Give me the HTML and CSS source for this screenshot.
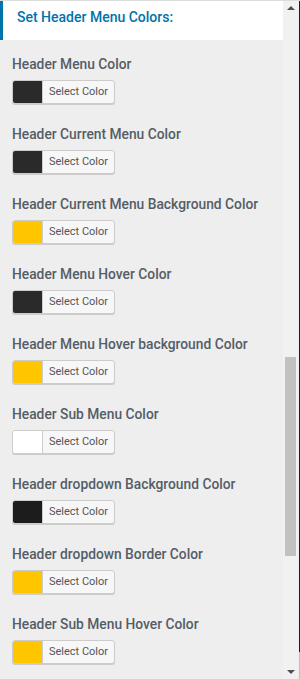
FILE: index.html
```html
<!DOCTYPE html>
<html lang="en">
<head>
    <meta charset="UTF-8">
    <meta name="viewport" content="width=device-width, initial-scale=1.0">
    <title>Header Menu Colors</title>
    <link rel="stylesheet" href="styles.css">
</head>
<body>

<div class="frame">
    <div class="panel">
        <h3 class="section-title">Set Header Menu Colors:</h3>

        <div class="control">
            <span class="control-label">Header Menu Color</span>
            <button class="color-btn"><span class="swatch dark"></span><span class="btn-text">Select Color</span></button>
        </div>
        <div class="control">
            <span class="control-label">Header Current Menu Color</span>
            <button class="color-btn"><span class="swatch dark"></span><span class="btn-text">Select Color</span></button>
        </div>
        <div class="control">
            <span class="control-label">Header Current Menu Background Color</span>
            <button class="color-btn"><span class="swatch yellow"></span><span class="btn-text">Select Color</span></button>
        </div>
        <div class="control">
            <span class="control-label">Header Menu Hover Color</span>
            <button class="color-btn"><span class="swatch dark"></span><span class="btn-text">Select Color</span></button>
        </div>
        <div class="control">
            <span class="control-label">Header Menu Hover background Color</span>
            <button class="color-btn"><span class="swatch yellow"></span><span class="btn-text">Select Color</span></button>
        </div>
        <div class="control">
            <span class="control-label">Header Sub Menu Color</span>
            <button class="color-btn"><span class="swatch white"></span><span class="btn-text">Select Color</span></button>
        </div>
        <div class="control">
            <span class="control-label">Header dropdown Background Color</span>
            <button class="color-btn"><span class="swatch black"></span><span class="btn-text">Select Color</span></button>
        </div>
        <div class="control">
            <span class="control-label">Header dropdown Border Color</span>
            <button class="color-btn"><span class="swatch yellow"></span><span class="btn-text">Select Color</span></button>
        </div>
        <div class="control">
            <span class="control-label">Header Sub Menu Hover Color</span>
            <button class="color-btn"><span class="swatch yellow"></span><span class="btn-text">Select Color</span></button>
        </div>
    </div>

    <div class="scrollbar">
        <span class="arrow up"></span>
        <div class="track">
            <div class="thumb"></div>
        </div>
        <span class="arrow down"></span>
    </div>

    <div class="edge"></div>
</div>

</body>
</html>
```

FILE: styles.css
```css
* {
    margin: 0;
    padding: 0;
    box-sizing: border-box;
}

body {
    font-family: Roboto, "Liberation Sans", sans-serif;
    background-color: #eeeeee;
    height: 679px;
    overflow: hidden;
}

.frame {
    display: flex;
    height: 679px;
    border-top: 1px solid #dcdcdc;
}

.panel {
    width: 283px;
    flex-shrink: 0;
    overflow: hidden;
    background-color: #eeeeee;
}

.section-title {
    height: 39px;
    background-color: #fff;
    border-left: 3px solid #0073aa;
    padding: 0 0 0 14px;
    font-size: 14px;
    font-weight: 500;
    line-height: 33px;
    color: #0073aa;
}

.control {
    padding: 14px 12px 0;
    display: flex;
    flex-direction: column;
    align-items: flex-start;
    gap: 6px;
    margin-bottom: 6px;
}

.control-label {
    font-size: 13.8px;
    font-weight: 500;
    line-height: 20px;
    color: #555d66;
    white-space: nowrap;
}

.color-btn {
    display: flex;
    align-items: stretch;
    height: 24px;
    width: 103px;
    border: 1px solid #cccccc;
    border-radius: 3px;
    background-color: #f7f7f7;
    box-shadow: 0 1px 0 #cccccc;
    overflow: hidden;
    font-family: inherit;
    cursor: pointer;
}

.swatch {
    width: 30px;
    flex-shrink: 0;
    border-right: 1px solid #cccccc;
}

.swatch.dark { background-color: #2b2a2b; }
.swatch.black { background-color: #1c1c1c; }
.swatch.yellow { background-color: #ffc600; }
.swatch.white { background-color: #ffffff; }

.btn-text {
    flex: 1;
    font-size: 11px;
    line-height: 22px;
    color: #555555;
    text-align: center;
}

.scrollbar {
    width: 15px;
    flex-shrink: 0;
    background-color: #f1f1f1;
    display: flex;
    flex-direction: column;
    align-items: center;
}

.track {
    flex: 1;
    width: 100%;
    padding: 0 2px;
}

.thumb {
    margin-top: 342px;
    height: 199px;
    background-color: #c1c1c1;
}

.arrow {
    width: 0;
    height: 0;
    border-left: 4px solid transparent;
    border-right: 4px solid transparent;
    margin: 5px 0;
}

.arrow.up {
    border-bottom: 4px solid #505050;
}

.arrow.down {
    border-top: 4px solid #505050;
}

.edge {
    flex: 1;
    background: linear-gradient(to bottom, #1e1e1e 0, #1e1e1e 96%, #ffc600 96%);
    border-left: 1px solid #eeeeee;
}
```
